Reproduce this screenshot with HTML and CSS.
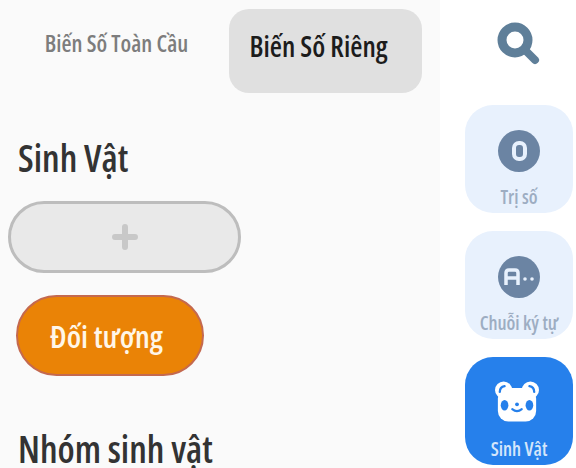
FILE: index.html
```html
<!DOCTYPE html>
<html lang="vi">

<head>
    <meta charset="UTF-8">
    <title>Biến Số</title>
    <link rel="stylesheet" href="styles.css">
</head>

<body>
    <div class="panel">
        <div class="tabs">
            <div class="tab">Biến Số Toàn Cầu</div>
            <div class="tab tab-active">Biến Số Riêng</div>
        </div>
        <h2 class="title">Sinh Vật</h2>
        <div class="add-btn">
            <svg width="26" height="26" viewBox="0 0 26 26">
                <path d="M13 3V23M3 13H23" stroke="#c8c8c8" stroke-width="6" stroke-linecap="round" />
            </svg>
        </div>
        <div class="sprite-btn">Đối tượng</div>
        <h2 class="title title-group">Nhóm sinh vật</h2>
    </div>

    <div class="side">
        <svg class="search" width="44" height="44" viewBox="0 0 44 44">
            <circle cx="18" cy="18" r="13" fill="none" stroke="#5f7f99" stroke-width="9" />
            <path d="M28 28L38 38" stroke="#5f7f99" stroke-width="8" stroke-linecap="round" />
        </svg>

        <div class="card">
            <div class="badge"><span class="badge-zero"></span></div>
            <span class="card-label">Trị số</span>
        </div>

        <div class="card">
            <div class="badge">
                <svg width="32" height="20" viewBox="0 0 32 20">
                    <path d="M3 18V6Q3 3 6 3H12Q15 3 15 6V18M3 11H15" fill="none" stroke="#e8f1fd" stroke-width="3.5" />
                    <circle cx="22" cy="12" r="1.8" fill="#e8f1fd" />
                    <circle cx="29" cy="12" r="1.8" fill="#e8f1fd" />
                </svg>
            </div>
            <span class="card-label">Chuỗi ký tự</span>
        </div>

        <div class="card card-active">
            <svg width="44" height="41" viewBox="0 0 46 42">
                <circle cx="9" cy="9" r="9" fill="#fff" />
                <circle cx="37" cy="9" r="9" fill="#fff" />
                <rect x="3" y="7" width="40" height="35" rx="11" fill="#fff" />
                <path d="M5 11Q5 6 10 5M36 5Q41 6 41 11" fill="none" stroke="#2680eb" stroke-width="2.4" stroke-linecap="round" />
                <ellipse cx="10" cy="25" rx="4" ry="5.5" fill="#2680eb" />
                <ellipse cx="36" cy="25" rx="4" ry="5.5" fill="#2680eb" />
                <circle cx="23" cy="24" r="2" fill="#2680eb" />
                <path d="M18 29Q23 33 28 29" fill="none" stroke="#2680eb" stroke-width="2.2" stroke-linecap="round" />
            </svg>
            <span class="card-label">Sinh Vật</span>
        </div>
    </div>
</body>

</html>
```

FILE: styles.css
```css
* {
    margin: 0;
    padding: 0;
    box-sizing: border-box;
}

body {
    width: 576px;
    height: 468px;
    overflow: hidden;
    display: flex;
    background-color: #fff;
    font-family: "Open Sans", sans-serif;
    font-stretch: 80%;
}

.panel {
    width: 440px;
    height: 468px;
    overflow: hidden;
    background-color: #fafafa;
    padding: 9px 18px 0 8px;
}

.tabs {
    display: flex;
    gap: 9px;
    height: 84px;
}

.tab {
    width: 212px;
    padding: 18px 0 0 5px;
    text-align: center;
    font-size: 23px;
    font-weight: 600;
    color: #7d7d7d;
}

.tab-active {
    width: 193px;
    padding: 18px 14px 0 0;
    border-radius: 20px;
    background-color: #e0e0e0;
    font-size: 28px;
    color: #1c1c1c;
}

.title {
    margin: 42px 0 0 10px;
    font-size: 37px;
    line-height: 46px;
    font-weight: 600;
    color: #333;
}

.add-btn {
    width: 233px;
    height: 72px;
    margin-top: 20px;
    display: flex;
    justify-content: center;
    align-items: center;
    border: 3px solid #bdbdbd;
    border-radius: 36px;
    background-color: #e9e9e9;
}

.sprite-btn {
    width: 188px;
    height: 81px;
    margin: 22px 0 0 8px;
    display: flex;
    justify-content: center;
    align-items: center;
    padding-right: 7px;
    border: 2px solid #c4694f;
    border-radius: 41px;
    background-color: #ea8306;
    font-size: 31px;
    font-weight: 600;
    color: #fff6e8;
}

.title-group {
    margin-top: 50px;
}

.side {
    width: 136px;
    height: 468px;
    display: flex;
    flex-direction: column;
    align-items: center;
    padding: 22px 0 0 22px;
}

.search {
    flex: none;
    margin: 0 0 39px 0;
}

.card {
    flex: none;
    width: 108px;
    height: 108px;
    margin-bottom: 18px;
    display: flex;
    flex-direction: column;
    align-items: center;
    justify-content: flex-end;
    padding-bottom: 4px;
    border-radius: 28px;
    background-color: #e8f1fd;
}

.badge {
    width: 42px;
    height: 42px;
    margin-bottom: 13px;
    display: flex;
    justify-content: center;
    align-items: center;
    border-radius: 50%;
    background-color: #6b84a3;
}

.badge-zero {
    width: 15px;
    height: 20px;
    border: 4px solid #e8f1fd;
    border-radius: 7px;
}

.card-label {
    font-size: 19px;
    line-height: 24px;
    font-weight: 600;
    white-space: nowrap;
    color: #9dadc2;
}

.card-active {
    background-color: #2680eb;
}

.card-active svg {
    margin: 0 4px 15px 0;
}

.card-active .card-label {
    color: #d4e6fb;
}
```
